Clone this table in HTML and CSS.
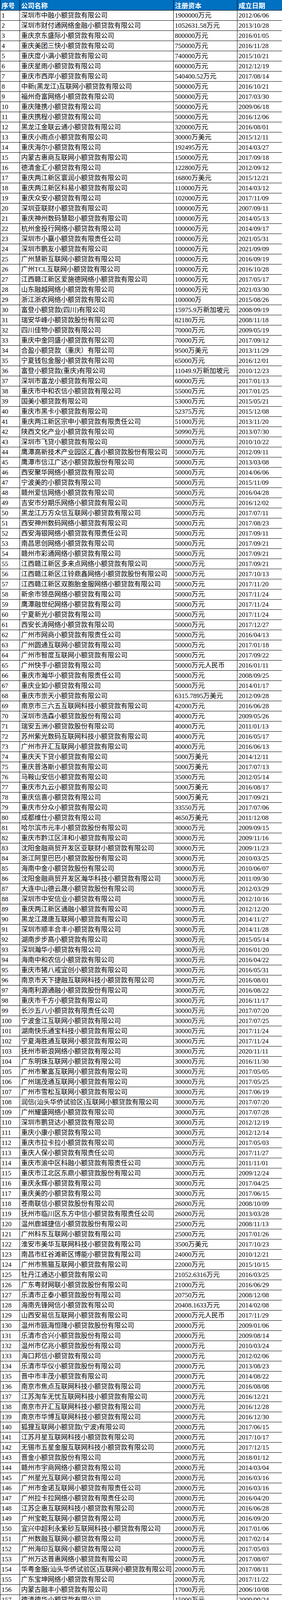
FILE: index.html
```html
<!DOCTYPE html>
<html lang="zh-CN">
<head>
<meta charset="utf-8">
<title>小额贷款公司注册资本排行</title>
<link rel="stylesheet" href="styles.css">
</head>
<body>
<div class="sheet" role="table">
<div class="row head" role="row"><div class="cell" role="columnheader">序号</div><div class="cell" role="columnheader">公司名称</div><div class="cell" role="columnheader">注册资本</div><div class="cell" role="columnheader">成立日期</div></div>
<div class="row"><div class="cell">1</div><div class="cell">深圳市中融小额贷款有限公司</div><div class="cell">1900000万元</div><div class="cell">2012/06/06</div></div>
<div class="row"><div class="cell">2</div><div class="cell">深圳市财付通网络金融小额贷款有限公司</div><div class="cell">1052631.58万元</div><div class="cell">2013/10/28</div></div>
<div class="row"><div class="cell">3</div><div class="cell">重庆京东盛际小额贷款有限公司</div><div class="cell">800000万元</div><div class="cell">2016/01/05</div></div>
<div class="row"><div class="cell">4</div><div class="cell">重庆美团三快小额贷款有限公司</div><div class="cell">750000万元</div><div class="cell">2016/11/28</div></div>
<div class="row"><div class="cell">5</div><div class="cell">重庆度小满小额贷款有限公司</div><div class="cell">740000万元</div><div class="cell">2015/10/21</div></div>
<div class="row"><div class="cell">6</div><div class="cell">重庆星雨小额贷款有限公司</div><div class="cell">600000万元</div><div class="cell">2012/12/19</div></div>
<div class="row"><div class="cell">7</div><div class="cell">重庆市西岸小额贷款有限公司</div><div class="cell">540400.52万元</div><div class="cell">2017/08/14</div></div>
<div class="row"><div class="cell">8</div><div class="cell">中新(黑龙江)互联网小额贷款有限公司</div><div class="cell">500000万元</div><div class="cell">2016/10/21</div></div>
<div class="row"><div class="cell">9</div><div class="cell">福州奇富网络小额贷款有限公司</div><div class="cell">500000万元</div><div class="cell">2017/03/30</div></div>
<div class="row"><div class="cell">10</div><div class="cell">重庆隆携小额贷款有限公司</div><div class="cell">500000万元</div><div class="cell">2009/06/18</div></div>
<div class="row"><div class="cell">11</div><div class="cell">重庆携程小额贷款有限公司</div><div class="cell">500000万元</div><div class="cell">2016/12/06</div></div>
<div class="row"><div class="cell">12</div><div class="cell">黑龙江金联云通小额贷款有限公司</div><div class="cell">320000万元</div><div class="cell">2016/08/01</div></div>
<div class="row"><div class="cell">13</div><div class="cell">重庆小雨点小额贷款有限公司</div><div class="cell">30000万美元</div><div class="cell">2015/12/11</div></div>
<div class="row"><div class="cell">14</div><div class="cell">重庆海尔小额贷款有限公司</div><div class="cell">192495万元</div><div class="cell">2014/03/27</div></div>
<div class="row"><div class="cell">15</div><div class="cell">内蒙古惠商互联网小额贷款有限公司</div><div class="cell">150000万元</div><div class="cell">2017/09/18</div></div>
<div class="row"><div class="cell">16</div><div class="cell">德清金汇小额贷款有限公司</div><div class="cell">122800万元</div><div class="cell">2012/09/12</div></div>
<div class="row"><div class="cell">17</div><div class="cell">重庆两江新区寰润小额贷款有限公司</div><div class="cell">16800万美元</div><div class="cell">2015/12/21</div></div>
<div class="row"><div class="cell">18</div><div class="cell">重庆两江新区科易小额贷款有限公司</div><div class="cell">110000万元</div><div class="cell">2014/03/12</div></div>
<div class="row"><div class="cell">19</div><div class="cell">重庆众安小额贷款有限公司</div><div class="cell">102000万元</div><div class="cell">2017/11/09</div></div>
<div class="row"><div class="cell">20</div><div class="cell">深圳亚联财小额贷款有限公司</div><div class="cell">100000万元</div><div class="cell">2007/09/11</div></div>
<div class="row"><div class="cell">21</div><div class="cell">重庆神州数码慧聪小额贷款有限公司</div><div class="cell">100000万元</div><div class="cell">2014/05/13</div></div>
<div class="row"><div class="cell">22</div><div class="cell">杭州金投行网络小额贷款有限公司</div><div class="cell">100000万元</div><div class="cell">2014/09/17</div></div>
<div class="row"><div class="cell">23</div><div class="cell">深圳市小赢小额贷款有限责任公司</div><div class="cell">100000万元</div><div class="cell">2021/05/31</div></div>
<div class="row"><div class="cell">24</div><div class="cell">深圳市鹏友小额贷款有限公司</div><div class="cell">100000万元</div><div class="cell">2021/09/09</div></div>
<div class="row"><div class="cell">25</div><div class="cell">广州慧新互联网小额贷款有限公司</div><div class="cell">100000万元</div><div class="cell">2016/09/19</div></div>
<div class="row"><div class="cell">26</div><div class="cell">广州TCL互联网小额贷款有限公司</div><div class="cell">100000万元</div><div class="cell">2016/10/28</div></div>
<div class="row"><div class="cell">27</div><div class="cell">江西赣江新区爱施德网络小额贷款有限公司</div><div class="cell">100000万元</div><div class="cell">2017/05/17</div></div>
<div class="row"><div class="cell">28</div><div class="cell">山东融越网络小额贷款有限公司</div><div class="cell">100000万元</div><div class="cell">2021/03/30</div></div>
<div class="row"><div class="cell">29</div><div class="cell">浙江浙农网络小额贷款有限公司</div><div class="cell">100000万</div><div class="cell">2015/08/26</div></div>
<div class="row"><div class="cell">30</div><div class="cell">富登小额贷款(四川)有限公司</div><div class="cell">15975.9万新加坡元</div><div class="cell">2008/09/19</div></div>
<div class="row"><div class="cell">31</div><div class="cell">瑞安华峰小额贷款股份有限公司</div><div class="cell">82180万元</div><div class="cell">2008/11/18</div></div>
<div class="row"><div class="cell">32</div><div class="cell">四川佳物小额贷款有限公司</div><div class="cell">70000万元</div><div class="cell">2009/05/19</div></div>
<div class="row"><div class="cell">33</div><div class="cell">重庆中金同盛小额贷款有限公司</div><div class="cell">70000万元</div><div class="cell">2017/09/12</div></div>
<div class="row"><div class="cell">34</div><div class="cell">合盈小额贷款（重庆）有限公司</div><div class="cell">9500万美元</div><div class="cell">2013/11/29</div></div>
<div class="row"><div class="cell">35</div><div class="cell">宁夏钱包金服小额贷款有限公司</div><div class="cell">65000万元</div><div class="cell">2016/12/01</div></div>
<div class="row"><div class="cell">36</div><div class="cell">富登小额贷款(重庆)有限公司</div><div class="cell">11049.9万新加坡元</div><div class="cell">2010/12/23</div></div>
<div class="row"><div class="cell">37</div><div class="cell">深圳市富龙小额贷款有限公司</div><div class="cell">60000万元</div><div class="cell">2017/01/13</div></div>
<div class="row"><div class="cell">38</div><div class="cell">重庆市中和农信小额贷款有限公司</div><div class="cell">55000万元</div><div class="cell">2017/01/25</div></div>
<div class="row"><div class="cell">39</div><div class="cell">国美小额贷款有限公司</div><div class="cell">53000万元</div><div class="cell">2015/05/21</div></div>
<div class="row"><div class="cell">40</div><div class="cell">重庆市黑卡小额贷款有限公司</div><div class="cell">52375万元</div><div class="cell">2015/12/08</div></div>
<div class="row"><div class="cell">41</div><div class="cell">重庆两江新区宗申小额贷款有限责任公司</div><div class="cell">51000万元</div><div class="cell">2013/11/20</div></div>
<div class="row"><div class="cell">42</div><div class="cell">陕西文化产业小额贷款有限公司</div><div class="cell">50990万元</div><div class="cell">2013/07/30</div></div>
<div class="row"><div class="cell">43</div><div class="cell">深圳市飞贷小额贷款有限公司</div><div class="cell">50000万元</div><div class="cell">2010/10/22</div></div>
<div class="row"><div class="cell">44</div><div class="cell">鹰潭高新技术产业园区汇鑫小额贷款股份有限公司</div><div class="cell">50000万元</div><div class="cell">2012/09/11</div></div>
<div class="row"><div class="cell">45</div><div class="cell">鹰潭市信江广达小额贷款股份有限公司</div><div class="cell">50000万元</div><div class="cell">2013/03/08</div></div>
<div class="row"><div class="cell">46</div><div class="cell">西安聚华网络小额贷款有限公司</div><div class="cell">50000万元</div><div class="cell">2014/06/06</div></div>
<div class="row"><div class="cell">47</div><div class="cell">宁波美的小额贷款有限公司</div><div class="cell">50000万元</div><div class="cell">2015/11/09</div></div>
<div class="row"><div class="cell">48</div><div class="cell">赣州爱信网络小额贷款有限公司</div><div class="cell">50000万元</div><div class="cell">2016/04/28</div></div>
<div class="row"><div class="cell">49</div><div class="cell">吉安市分期乐网络小额贷款有限公司</div><div class="cell">50000万元</div><div class="cell">2016/12/02</div></div>
<div class="row"><div class="cell">50</div><div class="cell">黑龙江万方众信互联网小额贷款有限公司</div><div class="cell">50000万元</div><div class="cell">2017/07/11</div></div>
<div class="row"><div class="cell">51</div><div class="cell">西安神州数码网络小额贷款有限公司</div><div class="cell">50000万元</div><div class="cell">2017/08/23</div></div>
<div class="row"><div class="cell">52</div><div class="cell">西安海银网络小额贷款有限责任公司</div><div class="cell">50000万元</div><div class="cell">2017/09/11</div></div>
<div class="row"><div class="cell">53</div><div class="cell">南昌思创网络小额贷款有限公司</div><div class="cell">50000万元</div><div class="cell">2017/09/21</div></div>
<div class="row"><div class="cell">54</div><div class="cell">赣州市彩通网络小额贷款有限公司</div><div class="cell">50000万元</div><div class="cell">2017/09/21</div></div>
<div class="row"><div class="cell">55</div><div class="cell">江西赣江新区多来点网络小额贷款有限公司</div><div class="cell">50000万元</div><div class="cell">2017/09/21</div></div>
<div class="row"><div class="cell">56</div><div class="cell">江西赣江新区江铃鼎鑫网络小额贷款股份有限公司</div><div class="cell">50000万元</div><div class="cell">2017/10/13</div></div>
<div class="row"><div class="cell">57</div><div class="cell">江西赣江新区双胞胎金服网络小额贷款有限公司</div><div class="cell">50000万元</div><div class="cell">2017/11/20</div></div>
<div class="row"><div class="cell">58</div><div class="cell">新余市领岳网络小额贷款有限公司</div><div class="cell">50000万元</div><div class="cell">2017/11/24</div></div>
<div class="row"><div class="cell">59</div><div class="cell">鹰潭融世纪网络小额贷款有限公司</div><div class="cell">50000万元</div><div class="cell">2017/11/24</div></div>
<div class="row"><div class="cell">60</div><div class="cell">宁夏新光小额贷款有限公司</div><div class="cell">50000万元</div><div class="cell">2017/11/24</div></div>
<div class="row"><div class="cell">61</div><div class="cell">西安长涛网络小额贷款有限公司</div><div class="cell">50000万元</div><div class="cell">2017/12/27</div></div>
<div class="row"><div class="cell">62</div><div class="cell">广州市网商小额贷款有限责任公司</div><div class="cell">50000万元</div><div class="cell">2016/04/13</div></div>
<div class="row"><div class="cell">63</div><div class="cell">广州圆通互联网小额贷款有限公司</div><div class="cell">50000万元</div><div class="cell">2017/01/18</div></div>
<div class="row"><div class="cell">64</div><div class="cell">广州市智度互联网小额贷款有限公司</div><div class="cell">50000万元</div><div class="cell">2017/09/22</div></div>
<div class="row"><div class="cell">65</div><div class="cell">广州快手小额贷款有限公司</div><div class="cell">50000万元人民币</div><div class="cell">2016/01/11</div></div>
<div class="row"><div class="cell">66</div><div class="cell">重庆市瀚华小额贷款有限责任公司</div><div class="cell">50000万元</div><div class="cell">2008/09/25</div></div>
<div class="row"><div class="cell">67</div><div class="cell">重庆业如小额贷款有限公司</div><div class="cell">50000万元</div><div class="cell">2014/01/17</div></div>
<div class="row"><div class="cell">68</div><div class="cell">重庆市崇天小额贷款有限公司</div><div class="cell">6315.7895万美元</div><div class="cell">2012/09/28</div></div>
<div class="row"><div class="cell">69</div><div class="cell">南京市三六五互联网科技小额贷款有限公司</div><div class="cell">42000万元</div><div class="cell">2016/06/28</div></div>
<div class="row"><div class="cell">70</div><div class="cell">深圳市浩森小额贷款股份有限公司</div><div class="cell">40000万元</div><div class="cell">2009/05/26</div></div>
<div class="row"><div class="cell">71</div><div class="cell">瑞安五洲小额贷款股份有限公司</div><div class="cell">40000万元</div><div class="cell">2011/01/13</div></div>
<div class="row"><div class="cell">72</div><div class="cell">苏州紫光数码互联网科技小额贷款有限公司</div><div class="cell">40000万元</div><div class="cell">2016/05/17</div></div>
<div class="row"><div class="cell">73</div><div class="cell">广州市开汇互联网小额贷款有限公司</div><div class="cell">40000万元</div><div class="cell">2016/06/13</div></div>
<div class="row"><div class="cell">74</div><div class="cell">重庆天下贷小额贷款有限公司</div><div class="cell">5000万美元</div><div class="cell">2014/12/11</div></div>
<div class="row"><div class="cell">75</div><div class="cell">重庆普洛斯小额贷款有限公司</div><div class="cell">5000万美元</div><div class="cell">2017/07/13</div></div>
<div class="row"><div class="cell">76</div><div class="cell">马鞍山安信小额贷款有限公司</div><div class="cell">35000万元</div><div class="cell">2012/05/14</div></div>
<div class="row"><div class="cell">77</div><div class="cell">重庆市九云小额贷款有限公司</div><div class="cell">5000万美元</div><div class="cell">2016/08/17</div></div>
<div class="row"><div class="cell">78</div><div class="cell">重庆信喜小额贷款有限公司</div><div class="cell">5000万美元</div><div class="cell">2017/09/21</div></div>
<div class="row"><div class="cell">79</div><div class="cell">重庆市分众小额贷款有限公司</div><div class="cell">33550万元</div><div class="cell">2017/07/06</div></div>
<div class="row"><div class="cell">80</div><div class="cell">成都维仕小额贷款有限公司</div><div class="cell">4650万美元</div><div class="cell">2011/12/08</div></div>
<div class="row"><div class="cell">81</div><div class="cell">哈尔滨市元丰小额贷款股份有限公司</div><div class="cell">30000万元</div><div class="cell">2009/09/15</div></div>
<div class="row"><div class="cell">82</div><div class="cell">重庆市黔江区沣和小额贷款有限公司</div><div class="cell">30000万元</div><div class="cell">2009/11/16</div></div>
<div class="row"><div class="cell">83</div><div class="cell">沈阳金融商贸开发区亚联财小额贷款有限公司</div><div class="cell">30000万元</div><div class="cell">2009/11/23</div></div>
<div class="row"><div class="cell">84</div><div class="cell">浙江阿里巴巴小额贷款股份有限公司</div><div class="cell">30000万元</div><div class="cell">2010/03/25</div></div>
<div class="row"><div class="cell">85</div><div class="cell">海南中金小额贷款股份有限公司</div><div class="cell">30000万元</div><div class="cell">2010/06/07</div></div>
<div class="row"><div class="cell">86</div><div class="cell">沈阳金融商贸开发区瀚华科技小额贷款有限公司</div><div class="cell">30000万元</div><div class="cell">2011/09/30</div></div>
<div class="row"><div class="cell">87</div><div class="cell">大连中山德云晟小额贷款股份有限公司</div><div class="cell">30000万元</div><div class="cell">2012/03/29</div></div>
<div class="row"><div class="cell">88</div><div class="cell">深圳市中安信业小额贷款有限公司</div><div class="cell">30000万元</div><div class="cell">2012/10/16</div></div>
<div class="row"><div class="cell">89</div><div class="cell">重庆两江新区通融小额贷款有限公司</div><div class="cell">30000万元</div><div class="cell">2012/12/20</div></div>
<div class="row"><div class="cell">90</div><div class="cell">黑龙江晟唐互联网小额贷款有限公司</div><div class="cell">30000万元</div><div class="cell">2014/11/27</div></div>
<div class="row"><div class="cell">91</div><div class="cell">深圳市顺丰合丰小额贷款有限公司</div><div class="cell">30000万元</div><div class="cell">2014/11/28</div></div>
<div class="row"><div class="cell">92</div><div class="cell">湖南步步高小额贷款有限公司</div><div class="cell">30000万元</div><div class="cell">2015/05/14</div></div>
<div class="row"><div class="cell">93</div><div class="cell">深圳瀚华小额贷款有限公司</div><div class="cell">30000万元</div><div class="cell">2016/01/20</div></div>
<div class="row"><div class="cell">94</div><div class="cell">海南中和农信小额贷款有限公司</div><div class="cell">30000万元</div><div class="cell">2016/04/22</div></div>
<div class="row"><div class="cell">95</div><div class="cell">重庆市猪八戒宜创小额贷款有限公司</div><div class="cell">30000万元</div><div class="cell">2016/05/31</div></div>
<div class="row"><div class="cell">96</div><div class="cell">南京市天下捷融互联网科技小额贷款有限公司</div><div class="cell">30000万元</div><div class="cell">2016/08/01</div></div>
<div class="row"><div class="cell">97</div><div class="cell">海南利源通融小额贷款股份有限公司</div><div class="cell">30000万元</div><div class="cell">2016/08/22</div></div>
<div class="row"><div class="cell">98</div><div class="cell">重庆市千方小额贷款有限公司</div><div class="cell">30000万元</div><div class="cell">2016/11/17</div></div>
<div class="row"><div class="cell">99</div><div class="cell">长沙五八小额贷款有限责任公司</div><div class="cell">30000万元</div><div class="cell">2017/07/20</div></div>
<div class="row"><div class="cell">100</div><div class="cell">宁波金江互联网小额贷款有限公司</div><div class="cell">30000万元</div><div class="cell">2017/07/25</div></div>
<div class="row"><div class="cell">101</div><div class="cell">湖南快乐通宝科技小额贷款有限公司</div><div class="cell">30000万元</div><div class="cell">2017/11/24</div></div>
<div class="row"><div class="cell">102</div><div class="cell">宁夏海胜通互联网小额贷款有限公司</div><div class="cell">30000万元</div><div class="cell">2017/11/24</div></div>
<div class="row"><div class="cell">103</div><div class="cell">抚州市新浪网络小额贷款有限公司</div><div class="cell">30000万元</div><div class="cell">2020/11/11</div></div>
<div class="row"><div class="cell">104</div><div class="cell">广东明珠互联网小额贷款有限公司</div><div class="cell">30000万元</div><div class="cell">2016/11/30</div></div>
<div class="row"><div class="cell">105</div><div class="cell">广州市聚富互联网小额贷款有限公司</div><div class="cell">30000万元</div><div class="cell">2017/05/05</div></div>
<div class="row"><div class="cell">106</div><div class="cell">广州瑞茂通互联网小额贷款有限公司</div><div class="cell">30000万元</div><div class="cell">2017/05/25</div></div>
<div class="row"><div class="cell">107</div><div class="cell">广州市雪松互联网小额贷款有限公司</div><div class="cell">30000万元</div><div class="cell">2017/06/19</div></div>
<div class="row"><div class="cell">108</div><div class="cell">润信(汕头华侨试验区)互联网小额贷款有限公司</div><div class="cell">30000万元</div><div class="cell">2017/07/20</div></div>
<div class="row"><div class="cell">109</div><div class="cell">广州耀盛网络小额贷款有限公司</div><div class="cell">30000万元</div><div class="cell">2017/07/28</div></div>
<div class="row"><div class="cell">110</div><div class="cell">深圳市鹏贷达小额贷款有限公司</div><div class="cell">30000万元</div><div class="cell">2012/12/19</div></div>
<div class="row"><div class="cell">111</div><div class="cell">重庆小康小额贷款有限公司</div><div class="cell">30000万元</div><div class="cell">2012/12/14</div></div>
<div class="row"><div class="cell">112</div><div class="cell">重庆市拉卡拉小额贷款有限公司</div><div class="cell">30000万元</div><div class="cell">2017/05/03</div></div>
<div class="row"><div class="cell">113</div><div class="cell">重庆人保小额贷款有限责任公司</div><div class="cell">30000万元</div><div class="cell">2017/11/27</div></div>
<div class="row"><div class="cell">114</div><div class="cell">重庆市渝中区科融小额贷款有限责任公司</div><div class="cell">30000万元</div><div class="cell">2011/11/01</div></div>
<div class="row"><div class="cell">115</div><div class="cell">重庆市江北区东鼎小额贷款股份有限公司</div><div class="cell">30000万元</div><div class="cell">2009/12/24</div></div>
<div class="row"><div class="cell">116</div><div class="cell">重庆永辉小额贷款有限公司</div><div class="cell">30000万元</div><div class="cell">2017/04/25</div></div>
<div class="row"><div class="cell">117</div><div class="cell">重庆美的小额贷款有限公司</div><div class="cell">30000万元</div><div class="cell">2017/06/15</div></div>
<div class="row"><div class="cell">118</div><div class="cell">苍南联信小额贷款股份有限公司</div><div class="cell">26000万元</div><div class="cell">2008/10/09</div></div>
<div class="row"><div class="cell">119</div><div class="cell">抚州市临川区东方中信小额贷款有限责任公司</div><div class="cell">26000万元</div><div class="cell">2013/03/28</div></div>
<div class="row"><div class="cell">120</div><div class="cell">温州鹿城捷信小额贷款股份有限公司</div><div class="cell">25000万元</div><div class="cell">2008/11/13</div></div>
<div class="row"><div class="cell">121</div><div class="cell">广州科东互联网小额贷款有限公司</div><div class="cell">25000万元</div><div class="cell">2017/01/26</div></div>
<div class="row"><div class="cell">122</div><div class="cell">淮安市美华互联网科技小额贷款有限公司</div><div class="cell">3500万美元</div><div class="cell">2017/10/23</div></div>
<div class="row"><div class="cell">123</div><div class="cell">南昌市红谷滩新区博能小额贷款有限公司</div><div class="cell">24000万元</div><div class="cell">2010/12/21</div></div>
<div class="row"><div class="cell">124</div><div class="cell">广州市熊猫互联网小额贷款有限公司</div><div class="cell">22000万元</div><div class="cell">2015/10/15</div></div>
<div class="row"><div class="cell">125</div><div class="cell">牡丹江通达小额贷款有限公司</div><div class="cell">21052.6316万元</div><div class="cell">2016/03/25</div></div>
<div class="row"><div class="cell">126</div><div class="cell">广东粤财网联小额贷款股份有限公司</div><div class="cell">21000万元</div><div class="cell">2016/06/29</div></div>
<div class="row"><div class="cell">127</div><div class="cell">乐清市正泰小额贷款股份有限公司</div><div class="cell">20750万元</div><div class="cell">2008/12/08</div></div>
<div class="row"><div class="cell">128</div><div class="cell">海南先锋网信小额贷款有限公司</div><div class="cell">20408.1633万元</div><div class="cell">2014/02/08</div></div>
<div class="row"><div class="cell">129</div><div class="cell">山西安易信互联网小额贷款有限公司</div><div class="cell">20000万元人民币</div><div class="cell">2017/11/29</div></div>
<div class="row"><div class="cell">130</div><div class="cell">温州市瓯海恒隆小额贷款股份有限公司</div><div class="cell">20000万元</div><div class="cell">2009/01/06</div></div>
<div class="row"><div class="cell">131</div><div class="cell">乐清市合兴小额贷款股份有限公司</div><div class="cell">20000万元</div><div class="cell">2009/08/14</div></div>
<div class="row"><div class="cell">132</div><div class="cell">温州市亿兆小额贷款股份有限公司</div><div class="cell">20000万元</div><div class="cell">2010/03/24</div></div>
<div class="row"><div class="cell">133</div><div class="cell">海口邦信小额贷款有限公司</div><div class="cell">20000万元</div><div class="cell">2012/02/06</div></div>
<div class="row"><div class="cell">134</div><div class="cell">乐清市华仪小额贷款股份有限公司</div><div class="cell">20000万元</div><div class="cell">2013/08/23</div></div>
<div class="row"><div class="cell">135</div><div class="cell">晋中市丰茂小额贷款有限公司</div><div class="cell">20000万元</div><div class="cell">2014/08/22</div></div>
<div class="row"><div class="cell">136</div><div class="cell">南京市焦点互联网科技小额贷款有限公司</div><div class="cell">20000万元</div><div class="cell">2016/08/08</div></div>
<div class="row"><div class="cell">137</div><div class="cell">江苏淘车无忧互联网科技小额贷款有限公司</div><div class="cell">20000万元</div><div class="cell">2016/12/21</div></div>
<div class="row"><div class="cell">138</div><div class="cell">南京市开汇互联网科技小额贷款有限公司</div><div class="cell">20000万元</div><div class="cell">2016/12/28</div></div>
<div class="row"><div class="cell">139</div><div class="cell">南京市华博互联网科技小额贷款有限公司</div><div class="cell">20000万元</div><div class="cell">2016/12/30</div></div>
<div class="row"><div class="cell">140</div><div class="cell">狐狸互联网小额贷款(宁波)有限公司</div><div class="cell">20000万元</div><div class="cell">2017/06/15</div></div>
<div class="row"><div class="cell">141</div><div class="cell">江苏月星互联网科技小额贷款有限公司</div><div class="cell">20000万元</div><div class="cell">2017/10/17</div></div>
<div class="row"><div class="cell">142</div><div class="cell">无锡市五星金服互联网科技小额贷款有限公司</div><div class="cell">20000万元</div><div class="cell">2017/12/15</div></div>
<div class="row"><div class="cell">143</div><div class="cell">晋金小额贷款股份有限公司</div><div class="cell">20000万元</div><div class="cell">2018/01/12</div></div>
<div class="row"><div class="cell">144</div><div class="cell">赣州市宇商网络小额贷款有限公司</div><div class="cell">20000万元</div><div class="cell">2014/03/04</div></div>
<div class="row"><div class="cell">145</div><div class="cell">广州星光互联网小额贷款有限公司</div><div class="cell">20000万元</div><div class="cell">2016/03/16</div></div>
<div class="row"><div class="cell">146</div><div class="cell">广州市金诺互联网小额贷款有限责任公司</div><div class="cell">20000万元</div><div class="cell">2016/03/16</div></div>
<div class="row"><div class="cell">147</div><div class="cell">广州拉卡拉网络小额贷款有限责任公司</div><div class="cell">20000万元</div><div class="cell">2016/04/20</div></div>
<div class="row"><div class="cell">148</div><div class="cell">江苏企惠互联网科技小额贷款有限公司</div><div class="cell">20000万元</div><div class="cell">2016/06/28</div></div>
<div class="row"><div class="cell">149</div><div class="cell">广州宝乾互联网小额贷款有限公司</div><div class="cell">20000万元</div><div class="cell">2016/09/20</div></div>
<div class="row"><div class="cell">150</div><div class="cell">宜兴中超利永紫砂互联网科技小额贷款有限公司</div><div class="cell">20000万元</div><div class="cell">2017/01/06</div></div>
<div class="row"><div class="cell">151</div><div class="cell">广州数融互联网小额贷款有限公司</div><div class="cell">20000万元</div><div class="cell">2017/02/14</div></div>
<div class="row"><div class="cell">152</div><div class="cell">广州海印互联网小额贷款有限公司</div><div class="cell">20000万元</div><div class="cell">2017/05/03</div></div>
<div class="row"><div class="cell">153</div><div class="cell">广州万达普惠网络小额贷款有限公司</div><div class="cell">20000万元</div><div class="cell">2017/08/07</div></div>
<div class="row"><div class="cell">154</div><div class="cell">华粤金服(汕头华侨试验区)互联网小额贷款有限公司</div><div class="cell">20000万元</div><div class="cell">2017/08/11</div></div>
<div class="row"><div class="cell">155</div><div class="cell">广东宝坤网络小额贷款有限公司</div><div class="cell">20000万元</div><div class="cell">2017/11/22</div></div>
<div class="row"><div class="cell">156</div><div class="cell">内蒙古融丰小额贷款有限公司</div><div class="cell">17000万元</div><div class="cell">2006/10/08</div></div>
<div class="row"><div class="cell">157</div><div class="cell">德清德华小额贷款有限公司</div><div class="cell">15000万元</div><div class="cell">2009/09/24</div></div>
<div class="row"><div class="cell">158</div><div class="cell">大连高新技术产业园区国融小额贷款股份有限公司</div><div class="cell">15000万元</div><div class="cell">2009/11/09</div></div>
<div class="row"><div class="cell">159</div><div class="cell">大连沙河口国汇小额贷款股份有限公司</div><div class="cell">15000万元</div><div class="cell">2011/01/27</div></div>
<div class="row"><div class="cell">160</div><div class="cell">宁波云联小额贷款有限公司</div><div class="cell">15000万元</div><div class="cell">2016/06/22</div></div>
<div class="row"><div class="cell">161</div><div class="cell">淮北汇邦小额贷款股份有限公司</div><div class="cell">12000万元</div><div class="cell">2012/08/07</div></div>
<div class="row"><div class="cell">162</div><div class="cell">温州市鹿城华泰小额贷款股份有限公司</div><div class="cell">10000万元</div><div class="cell">2011/09/06</div></div>
<div class="row"><div class="cell">163</div><div class="cell">哈尔滨市龙商小额贷款有限责任公司</div><div class="cell">10000万元</div><div class="cell">2011/09/14</div></div>
<div class="row"><div class="cell">164</div><div class="cell">大连高新园区中祥和小额贷款股份有限公司</div><div class="cell">10000万元</div><div class="cell">2012/03/27</div></div>
<div class="row"><div class="cell">165</div><div class="cell">海南惠丰小额贷款股份有限公司</div><div class="cell">10000万元</div><div class="cell">2014/07/28</div></div>
<div class="row"><div class="cell">166</div><div class="cell">酷秀互联网小额贷款(海南)有限公司</div><div class="cell">10000万元</div><div class="cell">2014/07/31</div></div>
<div class="row"><div class="cell">167</div><div class="cell">芜湖房融网络小额贷款有限公司</div><div class="cell">10000万元</div><div class="cell">2015/10/14</div></div>
<div class="row"><div class="cell">168</div><div class="cell">广州安易达互联网小额贷款有限公司</div><div class="cell">10000万元</div><div class="cell">2016/11/14</div></div>
<div class="row"><div class="cell">169</div><div class="cell">广州市安瑞互联网小额贷款有限公司</div><div class="cell">10000万元</div><div class="cell">2017/01/16</div></div>
<div class="row"><div class="cell">170</div><div class="cell">佳木斯分子魔方小额贷款有限公司</div><div class="cell">8000万元</div><div class="cell">2015/06/26</div></div>
<div class="row"><div class="cell">171</div><div class="cell">安庆市银谷小额贷款有限责任公司</div><div class="cell">6600万元</div><div class="cell">2009/02/18</div></div>
<div class="row"><div class="cell">172</div><div class="cell">大连金州广源小额贷款有限公司</div><div class="cell">6000万元</div><div class="cell">2009/12/29</div></div>
<div class="row"><div class="cell">173</div><div class="cell">海口大成小额贷款有限公司</div><div class="cell">5000万元</div><div class="cell">2013/06/27</div></div>
</div>
</body>
</html>
```
FILE: styles.css
```css
html, body {
  margin: 0;
  padding: 0;
  background: #ffffff;
}

.sheet {
  width: 721px;
  font-family: "Liberation Serif", "Noto Sans CJK SC", serif;
  font-size: 17px;
  color: #000000;
}

.row {
  display: grid;
  grid-template-columns: 50px 393px 163px 115px;
  height: 26px;
}

.cell {
  box-sizing: border-box;
  min-width: 0;
  border-left: 1px solid #000000;
  border-bottom: 1px solid #000000;
  padding: 2px 3px 0 3px;
  line-height: 22px;
  white-space: nowrap;
  overflow: hidden;
}

.head {
  height: 27px;
  background: #0070c0;
}

.head .cell {
  padding-top: 3px;
  color: #ffffff;
  font-family: "Noto Sans CJK SC", sans-serif;
  font-weight: 700;
}
```
